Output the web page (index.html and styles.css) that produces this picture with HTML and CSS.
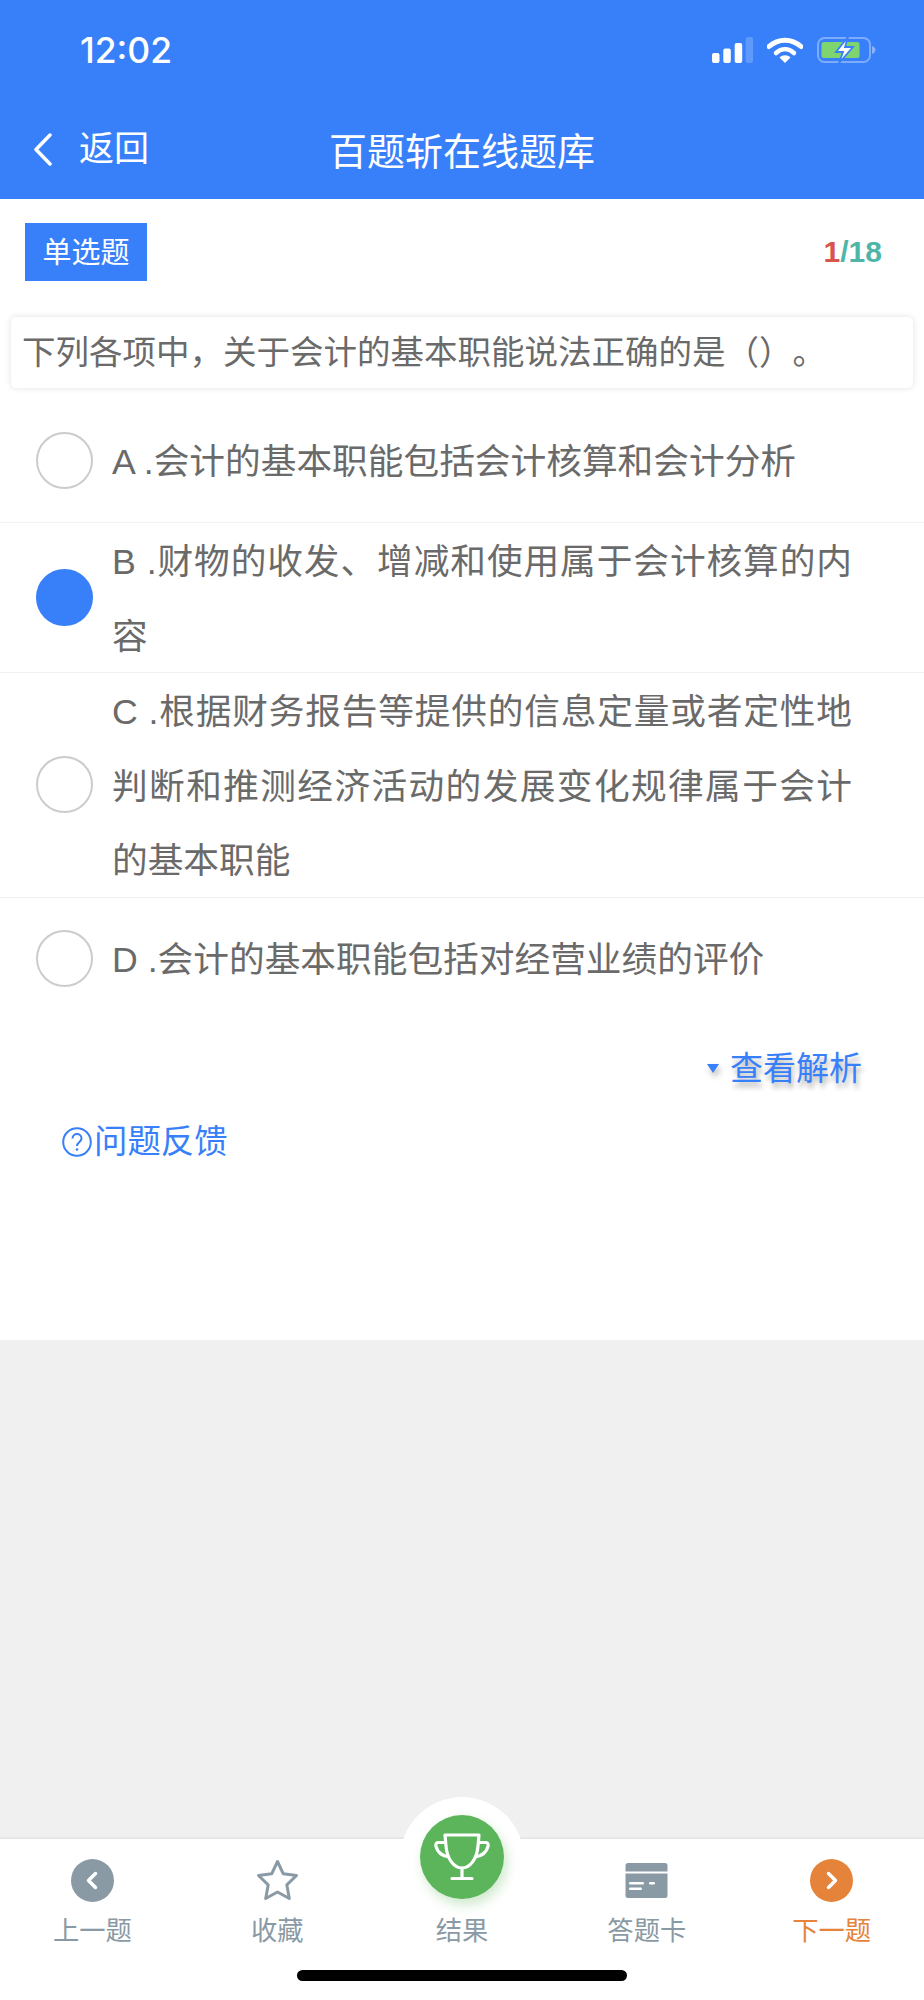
FILE: index.html
```html
<!DOCTYPE html>
<html lang="zh-CN">
<head>
    <meta charset="UTF-8">
    <meta name="viewport" content="width=device-width, initial-scale=1.0">
    <title>百题斩在线题库</title>
    <link rel="stylesheet" href="styles.css">
</head>
<body>

<header class="header">
    <div class="status-bar">
        <span class="time">12:02</span>
        <div class="status-icons">
            <svg class="icon-signal" width="41" height="26" viewBox="0 0 41 26">
                <rect x="0" y="16" width="7.500" height="10" rx="2" fill="#fff"/>
                <rect x="11.300" y="11.500" width="7.500" height="14.500" rx="2" fill="#fff"/>
                <rect x="22.700" y="6" width="7.500" height="20" rx="2" fill="#fff"/>
                <rect x="33.700" y="0" width="7.300" height="26" rx="2" fill="#fff" fill-opacity="0.2"/>
            </svg>
            <svg class="icon-wifi" width="36" height="26" viewBox="0 0 36 26">
                <path d="M2 9.500C11.500 1 24.500 1 34 9.500" fill="none" stroke="#fff" stroke-width="5" stroke-linecap="round"/>
                <path d="M9 16C14.500 11 21.500 11 27 16" fill="none" stroke="#fff" stroke-width="4.500" stroke-linecap="round"/>
                <path d="M12.500 20.500C15.500 17.500 20.500 17.500 23.500 20.500L18 26Z" fill="#fff"/>
            </svg>
            <svg class="icon-battery" width="59" height="26" viewBox="0 0 59 26">
                <rect x="1" y="1" width="52" height="24" rx="6.500" fill="none" stroke="#fff" stroke-opacity="0.35" stroke-width="2"/>
                <path d="M55 9C57.500 10 58.500 11.500 58.500 13S57.500 16 55 17Z" fill="#fff" fill-opacity="0.4"/>
                <rect x="4.500" y="5" width="38" height="16" rx="2.500" fill="#7ed56f"/>
                <path d="M31 0L19 15H26L22 26L36 10H28Z" fill="#fff" stroke="#3880fa" stroke-width="1.800"/>
            </svg>
        </div>
    </div>
    <div class="nav-bar">
        <div class="nav-back">
            <svg width="19" height="33" viewBox="0 0 19 33">
                <path d="M17 2L3 16.500L17 31" fill="none" stroke="#fff" stroke-width="3.500" stroke-linecap="round" stroke-linejoin="round"/>
            </svg>
            <span>返回</span>
        </div>
        <h1 class="nav-title">百题斩在线题库</h1>
    </div>
</header>

<main class="question">
    <div class="question-top">
        <span class="tag">单选题</span>
        <span class="progress"><b class="progress-now">1</b>/18</span>
    </div>
    <div class="stem">下列各项中，关于会计的基本职能说法正确的是（）。</div>

    <div class="option">
        <span class="radio"></span>
        <p>A .会计的基本职能包括会计核算和会计分析</p>
    </div>
    <div class="option">
        <span class="radio checked"></span>
        <p>B .财物的收发、增减和使用属于会计核算的内容</p>
    </div>
    <div class="option">
        <span class="radio"></span>
        <p>C .根据财务报告等提供的信息定量或者定性地判断和推测经济活动的发展变化规律属于会计的基本职能</p>
    </div>
    <div class="option option-last">
        <span class="radio"></span>
        <p>D .会计的基本职能包括对经营业绩的评价</p>
    </div>

    <div class="analysis"><i class="arrow-down"></i>查看解析</div>
    <div class="feedback">
        <svg width="30" height="30" viewBox="0 0 30 30">
            <circle cx="15" cy="15" r="13.800" fill="none" stroke="#3880fa" stroke-width="2"/>
            <path d="M10.500 11.500C10.500 5.500 19.500 5.500 19.500 11.500C19.500 15 15 15 15 19" fill="none" stroke="#3880fa" stroke-width="2"/>
            <circle cx="15" cy="22.500" r="1.300" fill="#3880fa"/>
        </svg>
        <span>问题反馈</span>
    </div>
</main>

<div class="filler"></div>

<footer class="tabbar">
    <div class="tab">
        <svg width="43" height="43" viewBox="0 0 43 43">
            <circle cx="21.500" cy="21.500" r="21.500" fill="#8a9aa5"/>
            <path d="M24.500 14.500L17.500 21.500L24.500 28.500" fill="none" stroke="#fff" stroke-width="3.500" stroke-linecap="round" stroke-linejoin="round"/>
        </svg>
        <span>上一题</span>
    </div>
    <div class="tab">
        <svg width="43" height="43" viewBox="0 0 43 43">
            <path d="M21.500 2.500L27.300 14.800L40.500 16.500L30.800 25.800L33.300 39.500L21.500 33L9.700 39.500L12.200 25.800L2.500 16.500L15.700 14.800Z" fill="none" stroke="#8a9aa5" stroke-width="3" stroke-linejoin="round"/>
        </svg>
        <span>收藏</span>
    </div>
    <div class="tab tab-result">
        <span>结果</span>
    </div>
    <div class="tab">
        <svg width="43" height="43" viewBox="0 0 43 43">
            <rect x="0.500" y="4" width="42" height="35" rx="2.500" fill="#8a9aa5"/>
            <rect x="0" y="12.500" width="43" height="2" fill="#fff"/>
            <rect x="4" y="23" width="15" height="2.500" rx="1.200" fill="#fff"/>
            <rect x="4" y="28.500" width="13" height="2.500" rx="1.200" fill="#fff"/>
            <rect x="24" y="23" width="6" height="2.500" rx="1.200" fill="#fff"/>
        </svg>
        <span>答题卡</span>
    </div>
    <div class="tab tab-next">
        <svg width="43" height="43" viewBox="0 0 43 43">
            <circle cx="21.500" cy="21.500" r="21.500" fill="#e5833a"/>
            <path d="M18.500 14.500L25.500 21.500L18.500 28.500" fill="none" stroke="#fff" stroke-width="3.500" stroke-linecap="round" stroke-linejoin="round"/>
        </svg>
        <span>下一题</span>
    </div>

    <div class="result-btn">
        <div class="result-circle">
            <svg width="60" height="50" viewBox="0 0 60 50">
                <path d="M13 3H47L46 14C45 27 38 36 30 36C22 36 15 27 14 14Z" fill="none" stroke="#fff" stroke-width="3.200" stroke-linejoin="round"/>
                <path d="M13.500 10.500H6C4 10.500 3.500 12.500 4 14.500C5.500 20 10 24 17 25M46.500 10.500H54C56 10.500 56.500 12.500 56 14.500C54.500 20 50 24 43 25" fill="none" stroke="#fff" stroke-width="3.200" stroke-linejoin="round"/>
                <path d="M30 36V46M20 46.500H40" fill="none" stroke="#fff" stroke-width="3.200" stroke-linecap="round"/>
            </svg>
        </div>
    </div>
    <div class="home-indicator"></div>
</footer>

</body>
</html>
```

FILE: styles.css
```css
* {
    box-sizing: border-box;
}
body {
    margin: 0;
    height: 2000px;
    display: flex;
    flex-direction: column;
    background-color: #f0f0f0;
    color: #6a6a6a;
    font-family: "Liberation Sans", "Noto Sans CJK SC", sans-serif;
    text-spacing-trim: space-all;
}

/* header */
.header {
    height: 199px;
    background-color: #3880fa;
    color: #fff;
}
.status-bar {
    height: 100px;
    padding: 0 48px 0 80px;
    display: flex;
    align-items: center;
    justify-content: space-between;
}
.time {
    font-family: Inter, "Liberation Sans", sans-serif;
    font-size: 35.500px;
    font-weight: 500;
}
.status-icons {
    display: flex;
    align-items: center;
    gap: 14px;
}
.nav-bar {
    position: relative;
    height: 99px;
    display: flex;
    align-items: center;
    justify-content: center;
}
.nav-back {
    position: absolute;
    left: 33px;
    top: 32px;
    display: flex;
    align-items: center;
    gap: 27px;
    font-size: 35px;
    line-height: 34px;
}
.nav-title {
    margin: -3px 0 0;
    font-size: 38px;
    font-weight: 400;
}

/* question */
.question {
    height: 1141px;
    padding-top: 24px;
    background-color: #fff;
}
.question-top {
    height: 58px;
    padding: 0 42px 0 25px;
    display: flex;
    align-items: center;
    justify-content: space-between;
}
.tag {
    width: 122px;
    height: 58px;
    background-color: #3880fa;
    color: #fff;
    font-size: 29px;
    line-height: 60px;
    text-align: center;
}
.progress {
    color: #4fb5a8;
    font-size: 30px;
    font-weight: 700;
}
.progress-now {
    color: #d9534f;
}
.stem {
    height: 71px;
    margin: 36px 11px 11px;
    padding-left: 11px;
    border-radius: 5px;
    box-shadow: 0 0 6px rgba(0, 0, 0, 0.12);
    font-size: 33.500px;
    line-height: 71px;
    white-space: nowrap;
}
.option {
    min-height: 124px;
    padding: 0 72px 0 36px;
    display: flex;
    align-items: center;
    gap: 19px;
    border-bottom: 1px solid #f2f2f2;
}
.option-last {
    min-height: 122px;
    border-bottom: none;
}
.option p {
    flex: 1;
    margin: 0 0 -2px;
    padding-top: 2px;
    font-size: 35.700px;
    line-height: 74.500px;
    text-align: justify;
}
.radio {
    flex: none;
    width: 57px;
    height: 57px;
    border: 2px solid #ccc;
    border-radius: 50%;
}
.radio.checked {
    border-color: #3880fa;
    background-color: #3880fa;
}
.analysis {
    margin-top: 27px;
    padding-right: 62px;
    display: flex;
    align-items: center;
    justify-content: flex-end;
    color: #3880fa;
    font-size: 33px;
    line-height: 44px;
    text-shadow: 2px 5px 5px rgba(0, 0, 0, 0.3);
}
.arrow-down {
    width: 0;
    height: 0;
    margin-right: 11px;
    border-top: 9px solid #3880fa;
    border-left: 6.500px solid transparent;
    border-right: 6.500px solid transparent;
    filter: drop-shadow(2px 4px 3px rgba(0, 0, 0, 0.3));
}
.feedback {
    margin-top: 29px;
    padding-left: 62px;
    display: flex;
    align-items: center;
    gap: 2px;
    color: #3880fa;
    font-size: 33.400px;
    line-height: 44px;
}
.filler {
    flex: 1;
}

/* tabbar */
.tabbar {
    position: relative;
    height: 161px;
    padding-top: 20px;
    display: flex;
    background-color: #fff;
    box-shadow: 0 -1px 2px rgba(0, 0, 0, 0.08);
}
.tab {
    flex: 1;
    height: 93px;
    display: flex;
    flex-direction: column;
    align-items: center;
    justify-content: flex-end;
    gap: 7px;
    color: #8a9aa5;
    font-size: 26.300px;
    line-height: 36px;
}
.tab svg {
    margin-bottom: auto;
}
.tab span {
    margin-bottom: 3px;
}
.tab-next {
    color: #e5833a;
}
.result-btn {
    position: absolute;
    left: 400px;
    top: -42px;
    width: 124px;
    height: 124px;
    padding-top: 18px;
    display: flex;
    justify-content: center;
    border-radius: 50%;
    background-color: #fff;
}
.result-circle {
    width: 84px;
    height: 84px;
    display: flex;
    align-items: center;
    justify-content: center;
    border-radius: 50%;
    background-color: #5cb55b;
    box-shadow: 3px 6px 12px rgba(92, 181, 91, 0.3);
}
.tab-result span {
    position: relative;
    z-index: 1;
}
.home-indicator {
    position: absolute;
    left: 297px;
    top: 131px;
    width: 330px;
    height: 11px;
    border-radius: 6px;
    background-color: #000;
}
```
